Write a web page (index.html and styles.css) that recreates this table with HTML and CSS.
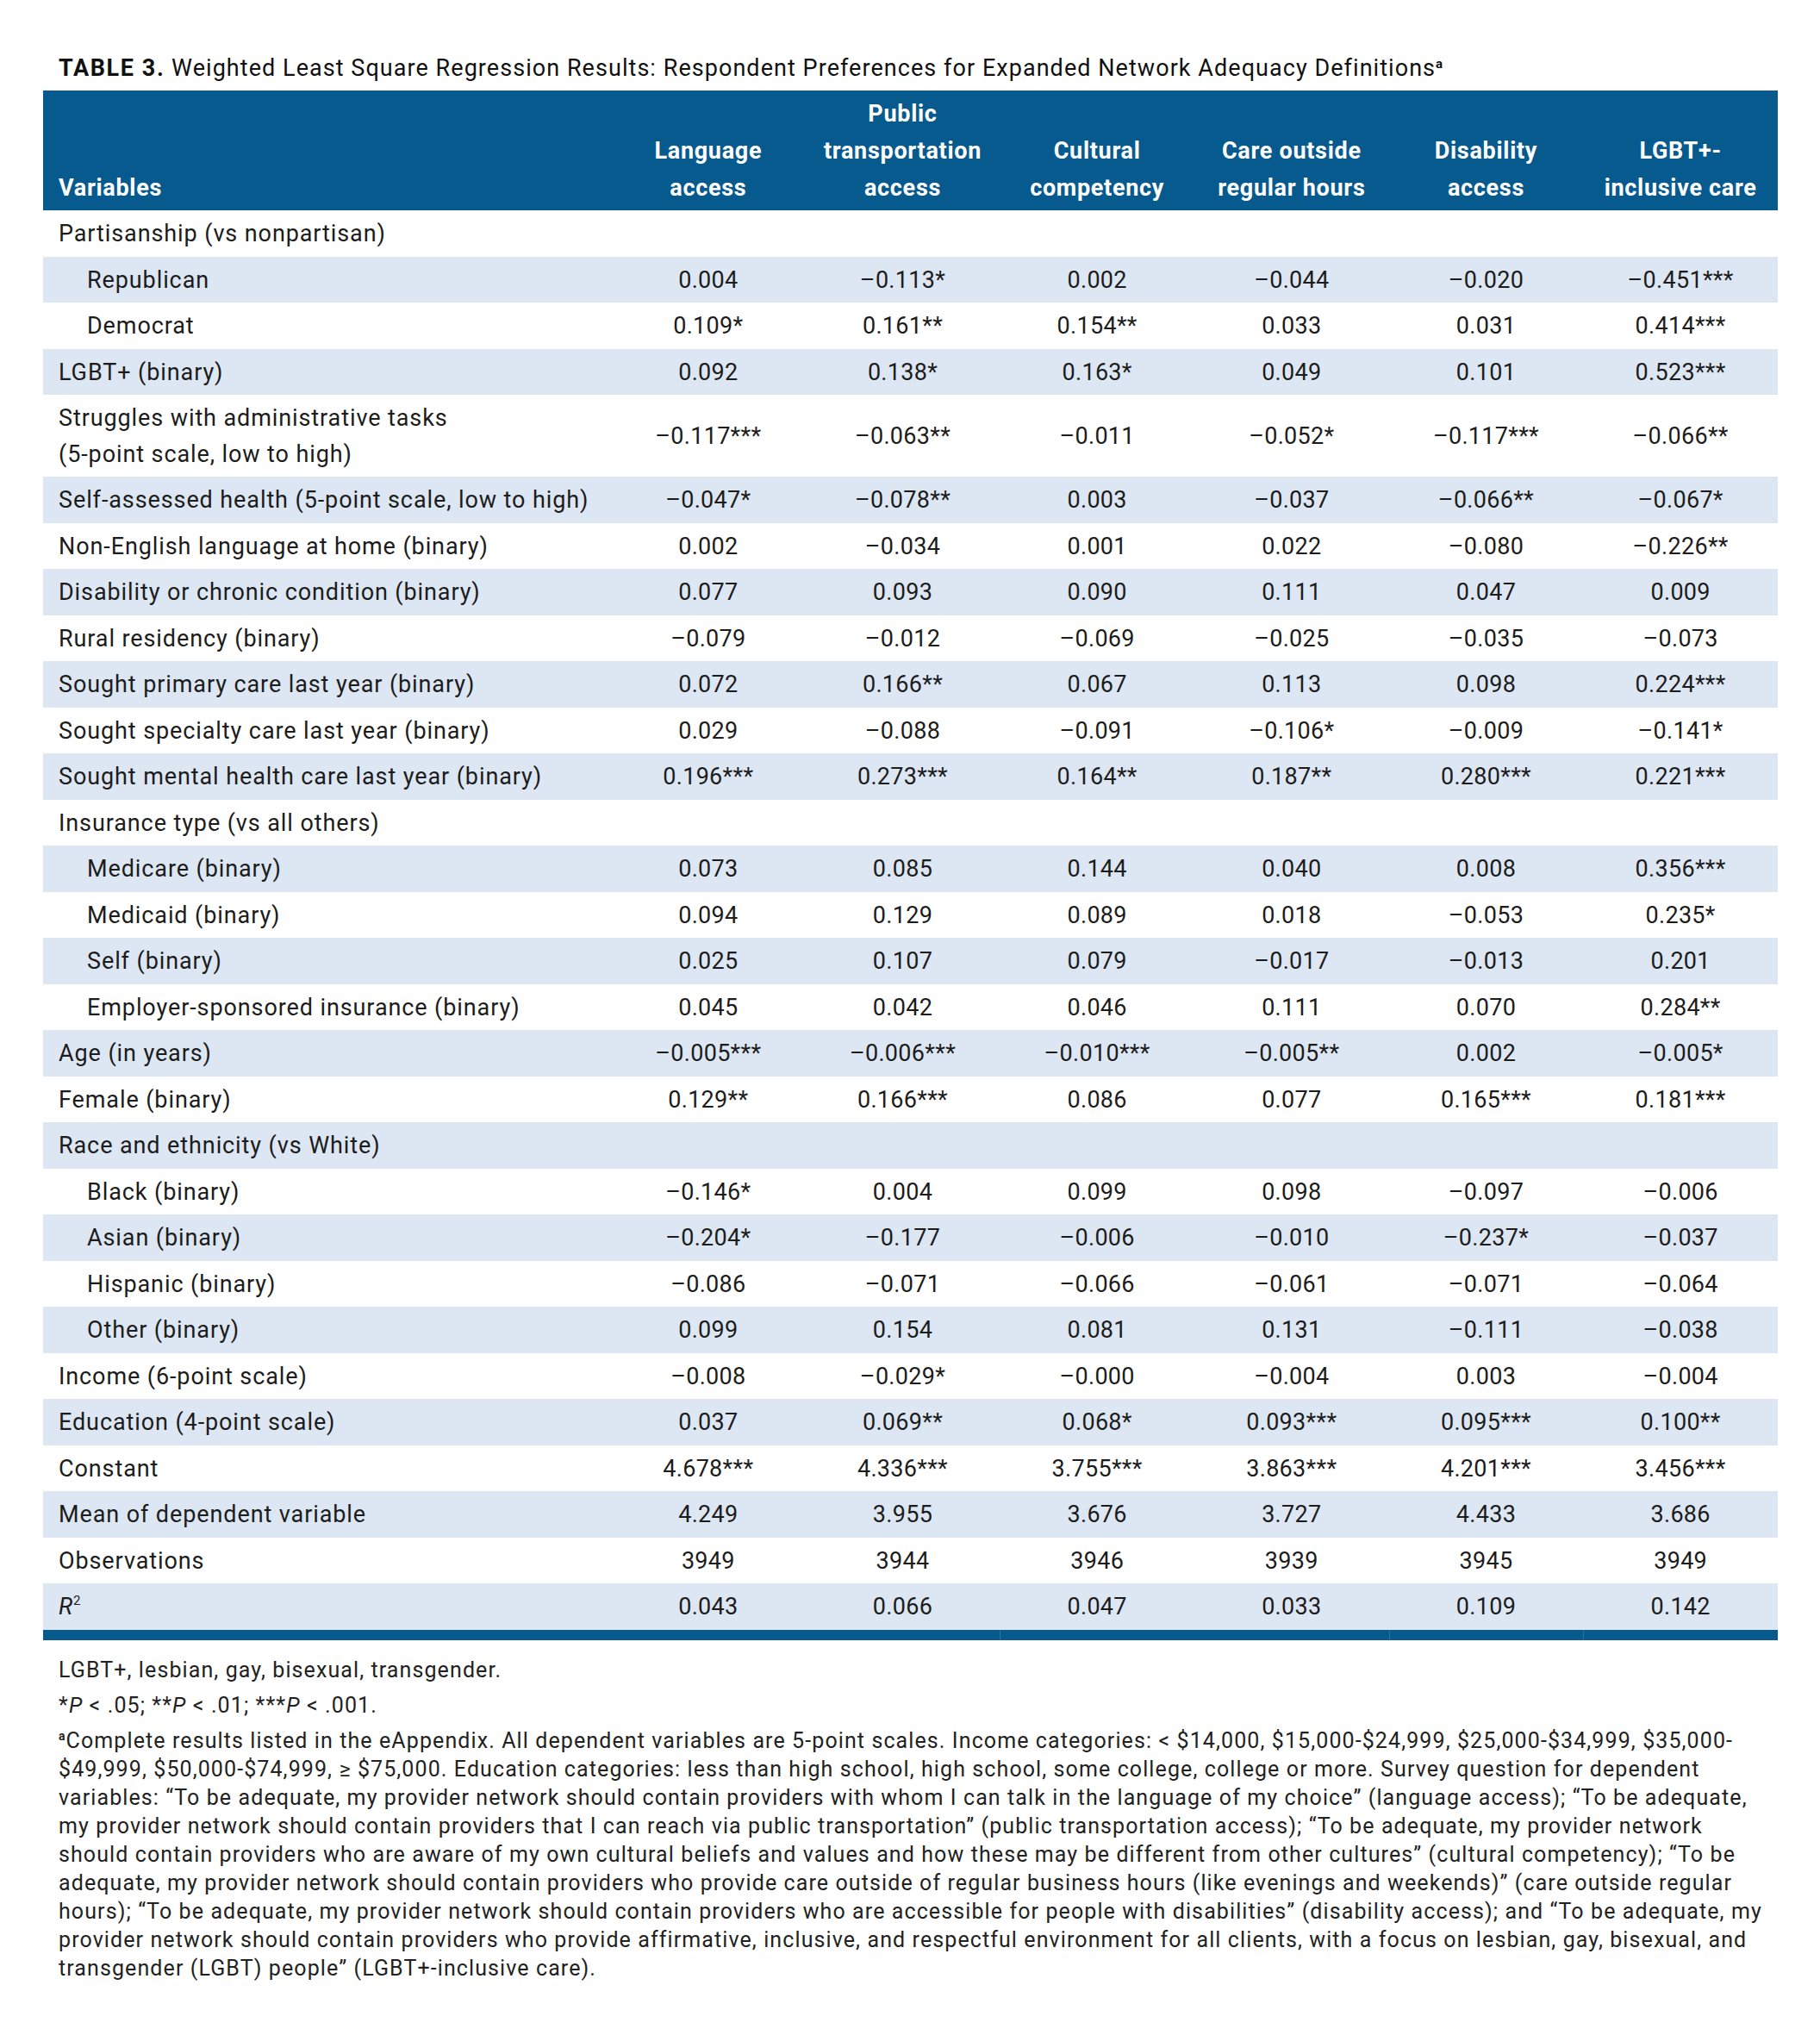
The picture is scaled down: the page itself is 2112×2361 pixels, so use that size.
FILE: index.html
```html
<!DOCTYPE html>
<html lang="en">
<head>
<meta charset="utf-8">
<title>Table 3</title>
<link rel="stylesheet" href="styles.css">
</head>
<body>
<div class="page">
  <h1 class="title"><b>TABLE 3.</b> Weighted Least Square Regression Results: Respondent Preferences for Expanded Network Adequacy Definitions<sup>a</sup></h1>
  <table class="results">
    <colgroup>
      <col class="c-var"><col class="c-num"><col class="c-num"><col class="c-num"><col class="c-num"><col class="c-num"><col class="c-num">
    </colgroup>
    <thead>
      <tr>
        <th class="var">Variables</th>
        <th>Language<br>access</th>
        <th>Public<br>transportation<br>access</th>
        <th>Cultural<br>competency</th>
        <th>Care outside<br>regular hours</th>
        <th>Disability<br>access</th>
        <th>LGBT+-<br>inclusive care</th>
      </tr>
    </thead>
    <tbody>
      <tr><td class="var">Partisanship (vs nonpartisan)</td><td></td><td></td><td></td><td></td><td></td><td></td></tr>
      <tr><td class="var sub">Republican</td><td>0.004</td><td>–0.113*</td><td>0.002</td><td>–0.044</td><td>–0.020</td><td>–0.451***</td></tr>
      <tr><td class="var sub">Democrat</td><td>0.109*</td><td>0.161**</td><td>0.154**</td><td>0.033</td><td>0.031</td><td>0.414***</td></tr>
      <tr><td class="var">LGBT+ (binary)</td><td>0.092</td><td>0.138*</td><td>0.163*</td><td>0.049</td><td>0.101</td><td>0.523***</td></tr>
      <tr><td class="var">Struggles with administrative tasks<br>(5-point scale, low to high)</td><td>–0.117***</td><td>–0.063**</td><td>–0.011</td><td>–0.052*</td><td>–0.117***</td><td>–0.066**</td></tr>
      <tr><td class="var">Self-assessed health (5-point scale, low to high)</td><td>–0.047*</td><td>–0.078**</td><td>0.003</td><td>–0.037</td><td>–0.066**</td><td>–0.067*</td></tr>
      <tr><td class="var">Non-English language at home (binary)</td><td>0.002</td><td>–0.034</td><td>0.001</td><td>0.022</td><td>–0.080</td><td>–0.226**</td></tr>
      <tr><td class="var">Disability or chronic condition (binary)</td><td>0.077</td><td>0.093</td><td>0.090</td><td>0.111</td><td>0.047</td><td>0.009</td></tr>
      <tr><td class="var">Rural residency (binary)</td><td>–0.079</td><td>–0.012</td><td>–0.069</td><td>–0.025</td><td>–0.035</td><td>–0.073</td></tr>
      <tr><td class="var">Sought primary care last year (binary)</td><td>0.072</td><td>0.166**</td><td>0.067</td><td>0.113</td><td>0.098</td><td>0.224***</td></tr>
      <tr><td class="var">Sought specialty care last year (binary)</td><td>0.029</td><td>–0.088</td><td>–0.091</td><td>–0.106*</td><td>–0.009</td><td>–0.141*</td></tr>
      <tr><td class="var">Sought mental health care last year (binary)</td><td>0.196***</td><td>0.273***</td><td>0.164**</td><td>0.187**</td><td>0.280***</td><td>0.221***</td></tr>
      <tr><td class="var">Insurance type (vs all others)</td><td></td><td></td><td></td><td></td><td></td><td></td></tr>
      <tr><td class="var sub">Medicare (binary)</td><td>0.073</td><td>0.085</td><td>0.144</td><td>0.040</td><td>0.008</td><td>0.356***</td></tr>
      <tr><td class="var sub">Medicaid (binary)</td><td>0.094</td><td>0.129</td><td>0.089</td><td>0.018</td><td>–0.053</td><td>0.235*</td></tr>
      <tr><td class="var sub">Self (binary)</td><td>0.025</td><td>0.107</td><td>0.079</td><td>–0.017</td><td>–0.013</td><td>0.201</td></tr>
      <tr><td class="var sub">Employer-sponsored insurance (binary)</td><td>0.045</td><td>0.042</td><td>0.046</td><td>0.111</td><td>0.070</td><td>0.284**</td></tr>
      <tr><td class="var">Age (in years)</td><td>–0.005***</td><td>–0.006***</td><td>–0.010***</td><td>–0.005**</td><td>0.002</td><td>–0.005*</td></tr>
      <tr><td class="var">Female (binary)</td><td>0.129**</td><td>0.166***</td><td>0.086</td><td>0.077</td><td>0.165***</td><td>0.181***</td></tr>
      <tr><td class="var">Race and ethnicity (vs White)</td><td></td><td></td><td></td><td></td><td></td><td></td></tr>
      <tr><td class="var sub">Black (binary)</td><td>–0.146*</td><td>0.004</td><td>0.099</td><td>0.098</td><td>–0.097</td><td>–0.006</td></tr>
      <tr><td class="var sub">Asian (binary)</td><td>–0.204*</td><td>–0.177</td><td>–0.006</td><td>–0.010</td><td>–0.237*</td><td>–0.037</td></tr>
      <tr><td class="var sub">Hispanic (binary)</td><td>–0.086</td><td>–0.071</td><td>–0.066</td><td>–0.061</td><td>–0.071</td><td>–0.064</td></tr>
      <tr><td class="var sub">Other (binary)</td><td>0.099</td><td>0.154</td><td>0.081</td><td>0.131</td><td>–0.111</td><td>–0.038</td></tr>
      <tr><td class="var">Income (6-point scale)</td><td>–0.008</td><td>–0.029*</td><td>–0.000</td><td>–0.004</td><td>0.003</td><td>–0.004</td></tr>
      <tr><td class="var">Education (4-point scale)</td><td>0.037</td><td>0.069**</td><td>0.068*</td><td>0.093***</td><td>0.095***</td><td>0.100**</td></tr>
      <tr><td class="var">Constant</td><td>4.678***</td><td>4.336***</td><td>3.755***</td><td>3.863***</td><td>4.201***</td><td>3.456***</td></tr>
      <tr><td class="var">Mean of dependent variable</td><td>4.249</td><td>3.955</td><td>3.676</td><td>3.727</td><td>4.433</td><td>3.686</td></tr>
      <tr><td class="var">Observations</td><td>3949</td><td>3944</td><td>3946</td><td>3939</td><td>3945</td><td>3949</td></tr>
      <tr><td class="var"><i>R</i><sup class="sq">2</sup></td><td>0.043</td><td>0.066</td><td>0.047</td><td>0.033</td><td>0.109</td><td>0.142</td></tr>
    </tbody>
    <tfoot>
      <tr class="bar"><td></td><td></td><td></td><td class="sep"></td><td></td><td class="sep"></td><td class="sep"></td></tr>
    </tfoot>
  </table>
  <div class="notes">
    <p>LGBT+, lesbian, gay, bisexual, transgender.</p>
    <p>*<i>P</i> &lt; .05; **<i>P</i> &lt; .01; ***<i>P</i> &lt; .001.</p>
    <p><sup class="fn">a</sup>Complete results listed in the eAppendix. All dependent variables are 5-point scales. Income categories: &lt; $14,000, $15,000-$24,999, $25,000-$34,999, $35,000-<br>$49,999, $50,000-$74,999, ≥ $75,000. Education categories: less than high school, high school, some college, college or more. Survey question for dependent<br>variables: “To be adequate, my provider network should contain providers with whom I can talk in the language of my choice” (language access); “To be adequate,<br>my provider network should contain providers that I can reach via public transportation” (public transportation access); “To be adequate, my provider network<br>should contain providers who are aware of my own cultural beliefs and values and how these may be different from other cultures” (cultural competency); “To be<br>adequate, my provider network should contain providers who provide care outside of regular business hours (like evenings and weekends)” (care outside regular<br>hours); “To be adequate, my provider network should contain providers who are accessible for people with disabilities” (disability access); and “To be adequate, my<br>provider network should contain providers who provide affirmative, inclusive, and respectful environment for all clients, with a focus on lesbian, gay, bisexual, and<br>transgender (LGBT) people” (LGBT+-inclusive care).</p>
  </div>
</div>
</body>
</html>
```

FILE: styles.css
```css
html, body {
  margin: 0;
  padding: 0;
  background: #ffffff;
}

.page {
  width: 2013px;
  padding: 0 0 40px 50px;
  font-family: Roboto, "Liberation Sans", Arial, sans-serif;
  color: #1c1c1c;
}

.title {
  margin: 0 0 11px 0;
  padding: 64px 0 0 18px;
  font-size: 27px;
  line-height: 30px;
  font-weight: 400;
  letter-spacing: 1.05px;
  color: #111;
  white-space: nowrap;
}

.title b {
  font-weight: 700;
  letter-spacing: 1.6px;
}

.title sup {
  font-size: 15px;
  font-weight: 700;
  vertical-align: 9px;
  line-height: 0;
}

.results {
  width: 2013px;
  border-collapse: collapse;
  border-spacing: 0;
  table-layout: fixed;
}

.c-var { width: 659px; }
.c-num { width: 225.67px; }

.results thead th {
  background: #075a8e;
  color: #ffffff;
  font-weight: 700;
  font-size: 27px;
  line-height: 43px;
  letter-spacing: 0.7px;
  padding: 6px 0 4px 0;
  text-align: center;
  vertical-align: bottom;
}

.results thead th.var {
  text-align: left;
  padding-left: 18px;
}

.results tbody td {
  font-size: 27px;
  line-height: 41.5px;
  letter-spacing: 0.3px;
  padding: 7px 0 5px 0;
  text-align: center;
  vertical-align: middle;
  white-space: nowrap;
}

.results tbody td.var {
  text-align: left;
  padding-left: 18px;
  letter-spacing: 0.9px;
}

.results tbody td.sub {
  padding-left: 51px;
}

.results tbody tr:nth-child(even) td {
  background: #dce7f3;
}

.sq {
  font-size: 15px;
  vertical-align: 11px;
  line-height: 0;
}

.results tfoot tr.bar td {
  height: 12px;
  padding: 0;
  background: #075a8e;
}

.results tfoot tr.bar td.sep {
  box-shadow: inset 1px 0 0 rgba(255, 255, 255, 0.14);
}

.notes {
  padding: 18px 0 0 18px;
  font-size: 25px;
  line-height: 33px;
  letter-spacing: 1.1px;
  color: #222;
}

.notes p {
  margin: 0 0 8px 0;
  white-space: nowrap;
}

.notes .fn {
  font-size: 14px;
  font-weight: 700;
  vertical-align: 9px;
  line-height: 0;
}
```
